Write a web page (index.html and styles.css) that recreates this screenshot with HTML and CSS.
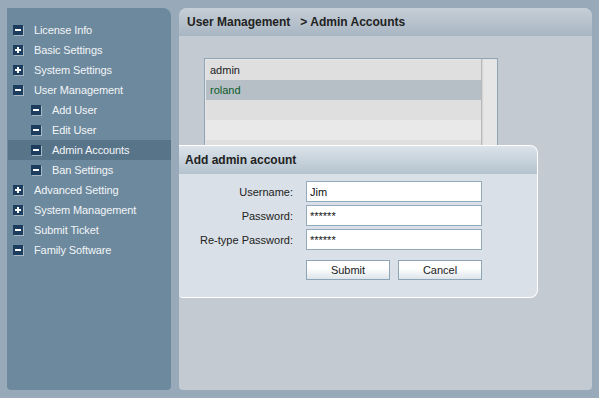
FILE: index.html
```html
<!DOCTYPE html>
<html lang="en">
<head>
    <meta charset="UTF-8">
    <title>Admin Accounts</title>
    <link rel="stylesheet" href="styles.css">
</head>
<body>
    <div class="page">
        <!-- Menu -->
        <ul class="menu">
            <li><span class="icon minus"></span>License Info</li>
            <li><span class="icon plus"></span>Basic Settings</li>
            <li><span class="icon plus"></span>System Settings</li>
            <li><span class="icon minus"></span>User Management</li>
            <li class="sub"><span class="icon minus"></span>Add User</li>
            <li class="sub"><span class="icon minus"></span>Edit User</li>
            <li class="sub active"><span class="icon minus"></span>Admin Accounts</li>
            <li class="sub"><span class="icon minus"></span>Ban Settings</li>
            <li><span class="icon plus"></span>Advanced Setting</li>
            <li><span class="icon plus"></span>System Management</li>
            <li><span class="icon minus"></span>Submit Ticket</li>
            <li><span class="icon minus"></span>Family Software</li>
        </ul>

        <!-- Content -->
        <div class="main">
            <div class="main-head">User Management &nbsp;&nbsp;&gt; Admin Accounts</div>
            <div class="main-body">
                <div class="listbox">
                    <div class="rows">
                        <div class="row">admin</div>
                        <div class="row selected">roland</div>
                        <div class="row"></div>
                        <div class="row light"></div>
                        <div class="row"></div>
                    </div>
                    <div class="scroll"></div>
                </div>
            </div>

            <!-- Dialog -->
            <div class="dialog">
                <div class="dialog-head">Add admin account</div>
                <form class="dialog-body">
                    <label for="username">Username:</label>
                    <input type="text" id="username" value="Jim">
                    <label for="password">Password:</label>
                    <input type="text" id="password" value="******">
                    <label for="password2">Re-type Password:</label>
                    <input type="text" id="password2" value="******">
                    <div class="buttons">
                        <button type="button">Submit</button>
                        <button type="button">Cancel</button>
                    </div>
                </form>
            </div>
        </div>
    </div>
</body>
</html>
```

FILE: styles.css
```css
/* Base */
body {
    margin: 0;
    background: #98a9b9;
    font-family: "Liberation Sans", Arial, sans-serif;
    font-size: 11px;
    color: #222;
}

.page {
    display: flex;
    gap: 8px;
    padding: 8px 7px;
    height: 382px;
}

/* Menu */
.menu {
    width: 164px;
    margin: 0;
    padding: 12px 0 0;
    list-style: none;
    background: #6d899d;
    border-radius: 0 8px 4px 4px;
    box-sizing: border-box;
}

.menu li {
    display: flex;
    align-items: center;
    height: 20px;
    padding-left: 6px;
    color: #f2f5f8;
    letter-spacing: -0.1px;
}

.menu li.sub {
    padding-left: 24px;
}

.menu li.active {
    background: #587489;
    margin-left: 1px;
    padding-left: 23px;
}

.icon {
    position: relative;
    width: 10px;
    height: 10px;
    margin-right: 11px;
    background: #1c3d5e;
    box-shadow: 1px 1px 0 #a9b8c5;
}

.icon::before {
    content: "";
    position: absolute;
    left: 2px;
    top: 4px;
    width: 6px;
    height: 2px;
    background: #fff;
}

.plus::after {
    content: "";
    position: absolute;
    left: 4px;
    top: 2px;
    width: 2px;
    height: 6px;
    background: #fff;
}

/* Content */
.main {
    position: relative;
    width: 413px;
    background: #c3cad2;
    border-radius: 8px 8px 4px 4px;
    overflow: hidden;
}

.main-head {
    height: 28px;
    line-height: 28px;
    padding-left: 8px;
    font-weight: bold;
    font-size: 12px;
    background: linear-gradient(#c6ced6, #a8b6c3);
    color: #222;
}

.main-body {
    padding: 22px 0 0 25px;
}

.listbox {
    display: flex;
    width: 294px;
    border: 1px solid #8ea4b7;
    background: #e6e6e6;
    box-sizing: border-box;
}

.rows {
    flex: 1;
    padding: 1px 0 0 1px;
}

.row {
    height: 20px;
    line-height: 20px;
    padding-left: 4px;
    background: #dfdfdf;
}

.row.selected {
    background: #b6bec6;
    color: #0d5b2a;
}

.row.light {
    background: #e9e9e9;
}

.scroll {
    width: 16px;
    background: #e6e6e6;
    box-shadow: inset 2px 0 2px -1px #a9a9a9;
}

/* Dialog */
.dialog {
    position: absolute;
    left: 0;
    top: 137px;
    width: 359px;
    height: 153px;
    background: #d9e0e7;
    border: 1px solid #fff;
    border-left: none;
    border-radius: 0 8px 8px 4px;
    box-sizing: border-box;
    overflow: hidden;
}

.dialog-head {
    height: 28px;
    line-height: 28px;
    padding-left: 6px;
    font-weight: bold;
    font-size: 12px;
    background: linear-gradient(#dce3e9, #b4c3cf);
}

.dialog-body {
    display: grid;
    grid-template-columns: 114px 176px;
    column-gap: 13px;
    row-gap: 3px;
    padding-top: 7px;
    align-items: center;
}

.dialog-body label {
    text-align: right;
}

.dialog-body input {
    height: 21px;
    border: 1px solid #93a9bc;
    padding: 0 3px;
    font-family: "Liberation Sans", Arial, sans-serif;
    font-size: 11px;
    color: #111;
    box-sizing: border-box;
    width: 176px;
    margin: 0;
}

.buttons {
    grid-column: 2;
    display: flex;
    justify-content: space-between;
    margin-top: 7px;
}

.buttons button {
    width: 84px;
    height: 20px;
    padding: 0;
    border: 1px solid #8ea4b7;
    background: linear-gradient(#ffffff 40%, #dde4ea);
    font-family: "Liberation Sans", Arial, sans-serif;
    font-size: 11px;
    color: #222;
}
```
